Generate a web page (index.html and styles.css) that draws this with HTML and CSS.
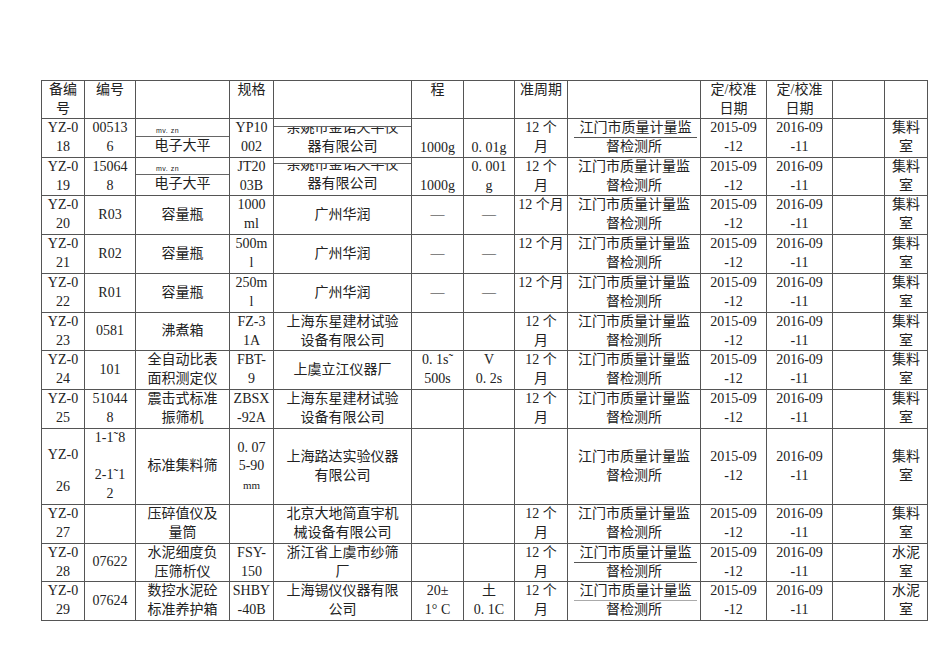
FILE: index.html
```html
<!DOCTYPE html>
<html lang="zh-CN">
<head>
<meta charset="utf-8">
<title>仪器设备检定/校准一览表</title>
<link rel="stylesheet" href="styles.css">
</head>
<body>
<div class="page">
<table class="grid">
<colgroup>
<col class="w43"><col class="w51"><col class="w94"><col class="w44"><col class="w138"><col class="w52"><col class="w51"><col class="w53"><col class="w133"><col class="w66"><col class="w66"><col class="w52"><col class="w43">
</colgroup>
<tbody>
<tr class="h38">
<td>备编<br>号</td><td>编号</td><td></td><td>规格</td><td></td><td>程</td><td></td><td>准周期</td><td></td><td>定/校准<br>日期</td><td>定/校准<br>日期</td><td></td><td></td>
</tr>
<tr class="h39">
<td>YZ-0<br>18</td><td>00513<br>6</td>
<td class="sp"><div class="tinybox r18"><span class="tiny">mv. zn</span></div><div class="ln">电子大平</div></td>
<td>YP10<br>002</td>
<td class="sp"><div class="capline c18"></div><div class="clip"><div class="clipin">余姚市金诺天平仪</div></div><div class="ln">器有限公司</div></td>
<td class="b">1000g</td><td class="b">0. 01g</td><td>12 个<br>月</td>
<td class="sp"><div class="ul">江门市质量计量监</div><div class="ln">督检测所</div></td>
<td>2015-09<br>-12</td><td>2016-09<br>-11</td><td></td><td>集料<br>室</td>
</tr>
<tr class="h38">
<td>YZ-0<br>19</td><td>15064<br>8</td>
<td class="sp"><div class="tinybox r19"><span class="tiny">mv. zn</span></div><div class="ln">电子大平</div></td>
<td>JT20<br>03B</td>
<td class="sp"><div class="capline c19"></div><div class="clip"><div class="clipin">余姚市金诺天平仪</div></div><div class="ln">器有限公司</div></td>
<td class="b">1000g</td><td>0. 001<br>g</td><td>12 个<br>月</td>
<td>江门市质量计量监<br>督检测所</td>
<td>2015-09<br>-12</td><td>2016-09<br>-11</td><td></td><td>集料<br>室</td>
</tr>
<tr class="h39">
<td>YZ-0<br>20</td><td class="m">R03</td><td class="m">容量瓶</td><td>1000<br>ml</td><td class="m">广州华润</td><td class="m">—</td><td class="m">—</td><td>12 个月</td>
<td>江门市质量计量监<br>督检测所</td><td>2015-09<br>-12</td><td>2016-09<br>-11</td><td></td><td>集料<br>室</td>
</tr>
<tr class="h39">
<td>YZ-0<br>21</td><td class="m">R02</td><td class="m">容量瓶</td><td>500m<br>l</td><td class="m">广州华润</td><td class="m">—</td><td class="m">—</td><td>12 个月</td>
<td>江门市质量计量监<br>督检测所</td><td>2015-09<br>-12</td><td>2016-09<br>-11</td><td></td><td>集料<br>室</td>
</tr>
<tr class="h39">
<td>YZ-0<br>22</td><td class="m">R01</td><td class="m">容量瓶</td><td>250m<br>l</td><td class="m">广州华润</td><td class="m">—</td><td class="m">—</td><td>12 个月</td>
<td>江门市质量计量监<br>督检测所</td><td>2015-09<br>-12</td><td>2016-09<br>-11</td><td></td><td>集料<br>室</td>
</tr>
<tr class="h38">
<td>YZ-0<br>23</td><td class="m">0581</td><td class="m">沸煮箱</td><td>FZ-3<br>1A</td><td>上海东星建材试验<br>设备有限公司</td><td></td><td></td><td>12 个<br>月</td>
<td>江门市质量计量监<br>督检测所</td><td>2015-09<br>-12</td><td>2016-09<br>-11</td><td></td><td>集料<br>室</td>
</tr>
<tr class="h39">
<td>YZ-0<br>24</td><td class="m">101</td><td>全自动比表<br>面积测定仪</td><td>FBT-<br>9</td><td class="m">上虞立江仪器厂</td><td>0. 1s˜<br>500s</td><td>V<br>0. 2s</td><td>12 个<br>月</td>
<td>江门市质量计量监<br>督检测所</td><td>2015-09<br>-12</td><td>2016-09<br>-11</td><td></td><td>集料<br>室</td>
</tr>
<tr class="h39">
<td>YZ-0<br>25</td><td>51044<br>8</td><td>震击式标准<br>振筛机</td><td>ZBSX<br>-92A</td><td>上海东星建材试验<br>设备有限公司</td><td></td><td></td><td>12 个<br>月</td>
<td>江门市质量计量监<br>督检测所</td><td>2015-09<br>-12</td><td>2016-09<br>-11</td><td></td><td>集料<br>室</td>
</tr>
<tr class="h76">
<td class="split"><div>YZ-0</div><div class="gap">26</div></td><td>1-1˜8<br><br>2-1˜1<br>2</td><td class="m">标准集料筛</td><td class="m">0. 07<br>5-90<br><span class="small">mm</span></td><td class="m">上海路达实验仪器<br>有限公司</td><td></td><td></td><td></td>
<td class="m">江门市质量计量监<br>督检测所</td><td class="m">2015-09<br>-12</td><td class="m">2016-09<br>-11</td><td></td><td class="m">集料<br>室</td>
</tr>
<tr class="h39">
<td>YZ-0<br>27</td><td></td><td>压碎值仪及<br>量筒</td><td></td><td>北京大地简直宇机<br>械设备有限公司</td><td></td><td></td><td>12 个<br>月</td>
<td>江门市质量计量监<br>督检测所</td><td>2015-09<br>-12</td><td>2016-09<br>-11</td><td></td><td>集料<br>室</td>
</tr>
<tr class="h38">
<td>YZ-0<br>28</td><td class="m">07622</td><td>水泥细度负<br>压筛析仪</td><td>FSY-<br>150</td><td>浙江省上虞市纱筛<br>厂</td><td></td><td></td><td>12 个<br>月</td>
<td class="sp"><div class="ul">江门市质量计量监</div><div class="ln">督检测所</div></td><td>2015-09<br>-12</td><td>2016-09<br>-11</td><td></td><td>水泥<br>室</td>
</tr>
<tr class="h39">
<td>YZ-0<br>29</td><td class="m">07624</td><td>数控水泥砼<br>标准养护箱</td><td>SHBY<br>-40B</td><td>上海锡仪仪器有限<br>公司</td><td>20±<br>1° C</td><td>土<br>0. 1C</td><td>12 个<br>月</td>
<td class="sp"><div class="ul light">江门市质量计量监</div><div class="ln">督检测所</div></td><td>2015-09<br>-12</td><td>2016-09<br>-11</td><td></td><td>水泥<br>室</td>
</tr>
</tbody>
</table>
</div>
</body>
</html>
```
FILE: styles.css
```css
body {
  margin: 0;
  background: #ffffff;
  font-family: "Liberation Serif", "Noto Sans CJK SC", serif;
  font-size: 14px;
  color: #222222;
}

.page {
  padding: 80px 0 0 41px;
}

.grid {
  border-collapse: collapse;
  table-layout: fixed;
  width: 887px;
}

.w43 { width: 43px; }
.w44 { width: 44px; }
.w51 { width: 51px; }
.w52 { width: 52px; }
.w53 { width: 53px; }
.w66 { width: 66px; }
.w94 { width: 94px; }
.w133 { width: 133px; }
.w138 { width: 138px; }

.grid td {
  border: 1px solid #555555;
  padding: 0 2px;
  line-height: 18.5px;
  vertical-align: top;
  text-align: center;
  white-space: nowrap;
  overflow: hidden;
}

.h38 { height: 38px; }
.h39 { height: 39px; }
.h76 { height: 76px; }

.grid td.m { vertical-align: middle; }
.grid td.b { vertical-align: bottom; }
.grid td.sp { padding: 0; }

.ln {
  line-height: 18px;
}

.tinybox {
  display: flex;
  align-items: flex-end;
  padding-left: 20px;
  border-bottom: 1px solid #666666;
  box-sizing: border-box;
}
.tinybox.r18 { height: 18px; }
.tinybox.r19 { height: 17px; }

.tiny {
  font-family: "Liberation Sans", sans-serif;
  font-size: 7px;
  line-height: 7px;
  letter-spacing: 0.5px;
  padding-bottom: 2px;
}

.capline {
  border-bottom: 1px solid #666666;
}
.capline.c18 { height: 7px; }
.capline.c19 { height: 5px; }

.clip {
  height: 8px;
  overflow: hidden;
  margin-bottom: 3px;
}
.clipin {
  margin-top: -9px;
  line-height: 19px;
}

.ul {
  border-bottom: 1px solid #555555;
  margin: 0 3px 0 6px;
  line-height: 18px;
}
.ul.light {
  border-bottom-color: #aaaaaa;
}

.grid td.split {
  padding-top: 17px;
}
.gap {
  margin-top: 13px;
}

.small {
  font-size: 11px;
}
```
